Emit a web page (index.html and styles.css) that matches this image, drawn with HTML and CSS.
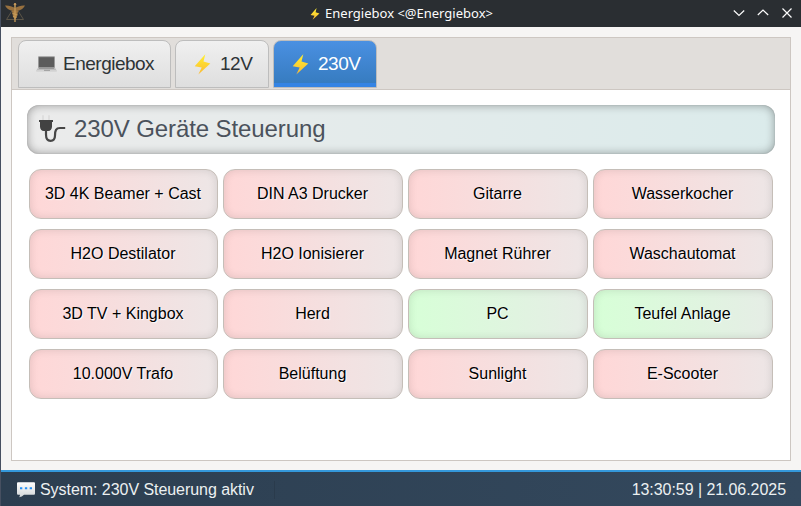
FILE: index.html
```html
<!DOCTYPE html>
<html lang="de">
<head>
<meta charset="utf-8">
<title>Energiebox</title>
<link rel="stylesheet" href="styles.css">
</head>
<body>
<svg class="defs" aria-hidden="true">
  <defs>
    <linearGradient id="gold" x1="0" y1="0" x2="0" y2="1"><stop offset="0" stop-color="#fff12f"/><stop offset="1" stop-color="#fbb934"/></linearGradient>
    <linearGradient id="bubble" x1="0" y1="0" x2="0" y2="1"><stop offset="0" stop-color="#fff"/><stop offset="1" stop-color="#d2d6d8"/></linearGradient>
    <symbol id="bolt" viewBox="0 0 16 21"><path d="M10.800.2.2 12.200l7 1.300-3.400 7 12-11-6.800-1.900z" fill="url(#gold)"/></symbol>
  </defs>
</svg>
<div class="window">
  <header class="titlebar">
    <svg class="logo" viewBox="0 0 20 20">
      <path d="M10 3 1.5 16.500h17z" fill="none" stroke="#5c5547" stroke-width="1"/>
      <path d="M0 2.500c4-.3 6.500.7 10 2.500 3.500-1.800 6-2.800 10-2.500C19 5 16 7.500 12 8l-2 1-2-1C4 7.500 1 5 0 2.500z" fill="#98713f"/>
      <path d="M7 8h6l-1 5.500-2 3.500-2-3.500z" fill="#a57a42"/>
      <path d="M10 .5v18.500M7.500 10.500l5 1.500M8 13.500l3.500 1" fill="none" stroke="#c59a58" stroke-width="1.300"/>
      <circle cx="10" cy="1.300" r="1.200" fill="#c5995b"/>
    </svg>
    <div class="caption"><svg class="bolt-small"><use href="#bolt"/></svg><span>Energiebox &lt;@Energiebox&gt;</span></div>
    <div class="controls">
      <svg viewBox="0 0 12 12"><path d="M.8 3.500 6 8.500l5.200-5"/></svg>
      <svg viewBox="0 0 12 12"><path d="M.8 8 6 3l5.200 5"/></svg>
      <svg viewBox="0 0 12 12"><path d="m1.500 1.500 9 9m0-9-9 9"/></svg>
    </div>
  </header>
  <main class="notebook">
    <nav class="tabs">
      <div class="tab tab-home">
        <svg class="laptop" viewBox="0 0 21 16"><rect x="2" y=".2" width="17" height="12" rx="1" fill="#999"/><rect x="3" y="1.200" width="15" height="10" fill="#5c5c5c"/><path d="M2 11.700h17l1.700 2.800H.3z" fill="#bdbdbd"/><path d="M3 12.500h15" stroke="#999"/><path d="M.2 14h20.600v1.700H.2z" fill="#d2d2d2"/><path d="M8 14.300h6" stroke="#999"/></svg>
        <span>Energiebox</span>
      </div>
      <div class="tab tab-low"><svg class="bolt"><use href="#bolt"/></svg><span>12V</span></div>
      <div class="tab tab-high active"><svg class="bolt"><use href="#bolt"/></svg><span>230V</span></div>
    </nav>
    <section class="page">
      <h1 class="heading">
        <svg class="plug" viewBox="0 0 27 27"><path d="M4 1v5M10 1v5" stroke="#dedede" stroke-width="2" stroke-linecap="round"/><path d="M0 5h14v2h-1v4.500c0 2.500-1.500 4.500-4 4.500H5c-2.500 0-4-2-4-4.500V7H0z" fill="#424242"/><path d="M7 15v4.500c0 4 1.800 6.300 4.500 6.300s4.500-2 4.500-5.300c0-5 1-7.500 5-7.500h5.200" fill="none" stroke="#464646" stroke-width="2.200"/></svg>
        <span>230V Geräte Steuerung</span>
      </h1>
      <div class="devices">
        <button>3D 4K Beamer + Cast</button><button>DIN A3 Drucker</button><button>Gitarre</button><button>Wasserkocher</button>
        <button>H2O Destilator</button><button>H2O Ionisierer</button><button>Magnet Rührer</button><button>Waschautomat</button>
        <button>3D TV + Kingbox</button><button>Herd</button><button class="on">PC</button><button class="on">Teufel Anlage</button>
        <button>10.000V Trafo</button><button>Belüftung</button><button>Sunlight</button><button>E-Scooter</button>
      </div>
    </section>
  </main>
  <footer class="status">
    <div class="message">
      <svg class="speech" viewBox="0 0 18 16"><path d="M1 .2h16q1 0 1 1v10.300q0 1.200-1 1.200H7Q5 15 2 15.200q1-1 1-2.500H1q-1 0-1-1.200V1.200q0-1 1-1z" fill="url(#bubble)"/><path d="M3 5.300h2.300v2H3zm4.900 0h2.300v2H7.900zm4.800 0H15v2h-2.300z" fill="#2490f5"/></svg>
      <span>System: 230V Steuerung aktiv</span>
    </div>
    <time>13:30:59 | 21.06.2025</time>
  </footer>
</div>
</body>
</html>
```
FILE: styles.css
```css
* { box-sizing: border-box; }
body { margin: 0; font-family: "Liberation Sans", Arial, sans-serif; overflow: hidden; }
svg { display: block; flex: none; }
.defs { position: absolute; width: 0; height: 0; }
.window { width: 801px; height: 506px; display: flex; flex-direction: column; background: #f6f5f4; border-left: 1px solid #475061; }
.titlebar { height: 27px; flex: none; display: grid; grid-template-columns: 100px 1fr 100px; align-items: center; background: #2a2e32; color: #fcfcfc; }
.logo { width: 20px; height: 20px; margin: -1px 0 0 4px; }
.caption { display: flex; justify-content: center; align-items: center; gap: 4px; padding-bottom: 2px; font: 13px/18px "Noto Sans", sans-serif; white-space: nowrap; }
.bolt-small { width: 12px; height: 12px; margin-top: 3px; }
.controls { display: flex; justify-content: flex-end; gap: 12px; padding: 0 8px 2px 0; }
.controls svg { width: 12px; height: 12px; fill: none; stroke: #fcfcfc; stroke-width: 1.2; }
.notebook { margin: 10px 10px 0 10px; width: 780px; height: 424px; display: flex; flex-direction: column; border: 1px solid #cdc7c2; background: #fff; }
.tabs { height: 52px; flex: none; display: flex; gap: 4px; padding: 2px 6px 0; background: #e1dedb; border-bottom: 1px solid #cdc7c2; }
.tab { height: 48px; display: flex; align-items: center; border: 1px solid #bdbdbd; border-radius: 8px 8px 0 0; background: linear-gradient(#f0f0f0, #dedede); color: #2e3436; font-size: 19px; letter-spacing: -.5px; padding-left: 17px; }
.tab-home { width: 153px; gap: 6px; }
.tab-low { width: 94px; padding-left: 18px; gap: 9px; }
.tab-high { width: 104px; padding-left: 18px; gap: 9px; }
.tab.active { background: linear-gradient(#4a90e2, #357abd); box-shadow: inset 0 -4px #3584e4; color: #fff; }
.laptop { width: 21px; height: 16px; }
.bolt { width: 17px; height: 21px; margin-top: 1px; }
.page { padding: 15px; }
.heading { width: 748px; height: 49px; margin: 0 0 15px; padding: 0 11px 2px 12px; display: flex; align-items: center; gap: 8px; border-radius: 12px; background: linear-gradient(90deg, #ebebeb, #dbebeb); box-shadow: inset 0 0 10px rgba(0, 0, 0, .36), inset 0 0 1px rgba(0, 0, 0, .3); color: #4b525c; font-size: 24px; font-weight: 400; letter-spacing: -.1px; white-space: nowrap; }
.plug { width: 27px; height: 27px; }
.devices { margin-left: 2px; display: grid; grid-template-columns: 189px repeat(3, 180px); grid-auto-rows: 50px; gap: 10px 5px; }
.devices button { padding: 0 1px 0 0; border: 1px solid #c5beb8; border-radius: 12px; background: linear-gradient(90deg, #ffd7d7, #ede6e6); box-shadow: inset 0 0 8px rgba(0, 0, 0, .12); color: #000; font: 16px "Liberation Sans", Arial, sans-serif; text-shadow: 1px 1px 1px rgba(255, 255, 255, .9); }
.devices button.on { background: linear-gradient(90deg, #d7ffd7, #e6ede6); }
.status { margin-top: auto; height: 36px; flex: none; display: flex; align-items: center; justify-content: space-between; padding: 2px 15px 0 16px; border-top: 2px solid #3498db; background: linear-gradient(90deg, #2c3e50, #34495e); color: #ecf0f1; font-size: 16px; letter-spacing: -.05px; }
.message { width: 258px; height: 18px; display: flex; align-items: center; gap: 5px; border-right: 1px solid #2a3b4c; white-space: nowrap; }
.speech { width: 18px; height: 16px; }
```
